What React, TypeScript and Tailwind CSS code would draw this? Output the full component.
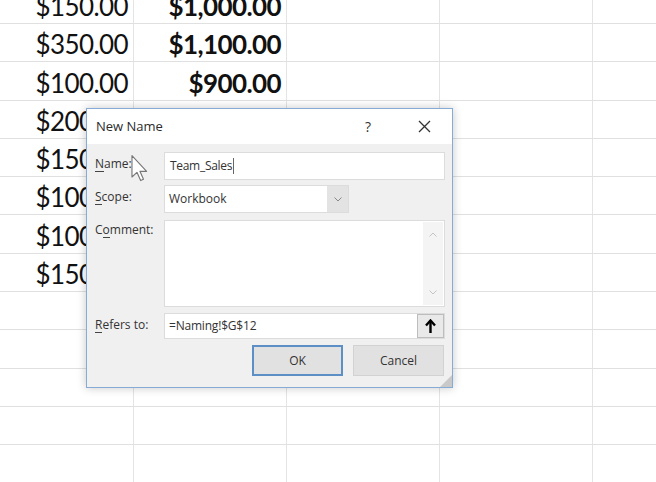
import React from "react";

const rows: [string, string][] = [
  ["$150.00", "$1,000.00"],
  ["$350.00", "$1,100.00"],
  ["$100.00", "$900.00"],
  ["$200.00", ""],
  ["$150.00", ""],
  ["$100.00", ""],
  ["$100.00", ""],
  ["$150.00", ""],
  ["", ""],
  ["", ""],
  ["", ""],
  ["", ""],
  ["", ""],
  ["", ""],
];

function Sheet() {
  return (
    <div className="flex flex-col mt-[-14.3px] ml-[-19px]" style={{ fontFamily: "Lato, 'Open Sans', sans-serif" }}>
      {rows.map((r, i) => (
        <div key={i} className="flex h-[38.3px] shrink-0 border-b border-[#e0e0e0]">
          <div className="w-[153px] shrink-0 border-r border-[#e4e4e4] flex items-end justify-end pr-[5px] pb-[4px] text-[26px] leading-none tracking-[-0.6px] text-[#111]">
            {r[0]}
          </div>
          <div className="w-[153px] shrink-0 border-r border-[#e4e4e4] flex items-end justify-end pr-[5px] pb-[4px] text-[26px] leading-none tracking-[-0.6px] font-bold text-[#111]">
            {r[1]}
          </div>
          <div className="w-[153px] shrink-0 border-r border-[#e4e4e4]" />
          <div className="w-[153px] shrink-0 border-r border-[#e4e4e4]" />
          <div className="w-[153px] shrink-0 border-r border-[#e4e4e4]" />
        </div>
      ))}
    </div>
  );
}

function Dialog() {
  const ul = "inline-block leading-[16px] bg-[linear-gradient(#444,#444)] bg-no-repeat";
  return (
    <div
      className="absolute left-[86px] top-[108px] w-[367px] h-[280px] border border-[#86abd6] bg-white flex flex-col shadow-[0_0_9px_rgba(0,0,0,0.22)] text-[#333]"
      style={{ fontFamily: "'Open Sans', 'Noto Sans', sans-serif" }}
    >
      <div className="h-[35px] shrink-0 flex items-center pl-[9px] pr-[16px] bg-white">
        <span className="text-[13px] text-[#2b2b2b] flex-1">New Name</span>
        <span className="w-[24px] text-center text-[14px] text-[#333]">?</span>
        <span className="w-[32px]" />
        <span className="w-[24px] flex items-center justify-center">
          <svg width="13" height="13" viewBox="0 0 13 13">
            <path d="M1 1 L12 12 M12 1 L1 12" stroke="#333" strokeWidth="1.3" fill="none" />
          </svg>
        </span>
      </div>
      <div className="flex-1 bg-[#f0f0f0] pt-[8px] pl-[8px] pr-[7px] flex flex-col text-[12px] relative">
        <div className="flex h-[28px] mb-[5px]">
          <div className="w-[69px] pt-[3px]">
            <span className={`${ul} bg-[length:9px_1px] bg-[position:0_100%]`}>Name:</span>
          </div>
          <div className="flex-1 bg-white border border-[#dcdcdc] flex items-center pl-[5px] text-[#333]">
            <span className="tracking-[-0.3px]">Team_Sales</span>
            <span className="w-px h-[16px] bg-[#666] ml-[1px]" />
          </div>
        </div>
        <div className="flex h-[28px] mb-[7px]">
          <div className="w-[69px] pt-[3px]">
            <span className={`${ul} bg-[length:7px_1px] bg-[position:0_100%]`}>Scope:</span>
          </div>
          <div className="w-[185px] bg-white border border-[#dcdcdc] flex">
            <div className="flex-1 flex items-center pl-[4px] text-[#333]">Workbook</div>
            <div className="w-[21px] bg-[#e3e3e3] flex items-center justify-center">
              <svg width="8" height="5" viewBox="0 0 8 5">
                <path d="M0.5 0.5 L4 4 L7.5 0.5" stroke="#888" strokeWidth="1" fill="none" />
              </svg>
            </div>
          </div>
        </div>
        <div className="flex h-[87px] mb-[6px]">
          <div className="w-[69px] pt-[1px]">
            <span className={`${ul} bg-[length:7px_1px] bg-[position:8px_100%]`}>Comment:</span>
          </div>
          <div className="flex-1 bg-white border border-[#dcdcdc] flex justify-end p-[1px]">
            <div className="w-[20px] bg-[#f4f4f4] flex flex-col items-center justify-between py-[10px]">
              <svg width="8" height="5" viewBox="0 0 8 5">
                <path d="M0.5 4.5 L4 1 L7.5 4.5" stroke="#c4c4c4" strokeWidth="1" fill="none" />
              </svg>
              <svg width="8" height="5" viewBox="0 0 8 5">
                <path d="M0.5 0.5 L4 4 L7.5 0.5" stroke="#c4c4c4" strokeWidth="1" fill="none" />
              </svg>
            </div>
          </div>
        </div>
        <div className="flex h-[26px] mb-[6px]">
          <div className="w-[69px] pt-[3px]">
            <span className={`${ul} bg-[length:7px_1px] bg-[position:0_100%]`}>Refers to:</span>
          </div>
          <div className="flex-1 bg-white border border-[#dcdcdc] flex">
            <div className="flex-1 flex items-center pl-[4px] text-[#333] tracking-[-0.2px]">=Naming!$G$12</div>
            <div className="w-[27px] bg-[#e9e9e9] border border-[#bdbdbd] flex items-center justify-center">
              <svg width="11" height="15" viewBox="0 0 11 15">
                <path d="M5.5 2 L5.5 14" stroke="#000" strokeWidth="2.4" />
                <path d="M1 6.5 L5.5 1.5 L10 6.5" stroke="#000" strokeWidth="2.4" fill="none" strokeLinejoin="miter" />
              </svg>
            </div>
          </div>
        </div>
        <div className="flex h-[31px] justify-end gap-[10px] pr-[1px]">
          <div className="w-[91px] bg-[#e1e1e1] border-2 border-[#5b8fc6] flex items-center justify-center text-[#333]">
            OK
          </div>
          <div className="w-[91px] bg-[#e1e1e1] border border-[#d2d2d2] flex items-center justify-center text-[#333]">
            Cancel
          </div>
        </div>
        <svg className="absolute right-0 bottom-0" width="12" height="12" viewBox="0 0 12 12">
          <path d="M12 0 L12 12 L0 12 Z" fill="#c9c9c9" />
        </svg>
      </div>
    </div>
  );
}

function Cursor() {
  return (
    <svg className="absolute left-[131px] top-[155px]" width="19" height="27" viewBox="0 0 13 19">
      <path
        d="M0.5 0.5 L0.5 15.5 L4 12.2 L6.6 18 L8.6 17.1 L6.1 11.5 L10.8 11.5 Z"
        fill="#fff"
        stroke="#777"
        strokeWidth="0.8"
        strokeLinejoin="round"
      />
    </svg>
  );
}

export default function App() {
  return (
    <div className="relative w-[656px] h-[482px] overflow-hidden bg-white">
      <Sheet />
      <Dialog />
      <Cursor />
    </div>
  );
}
